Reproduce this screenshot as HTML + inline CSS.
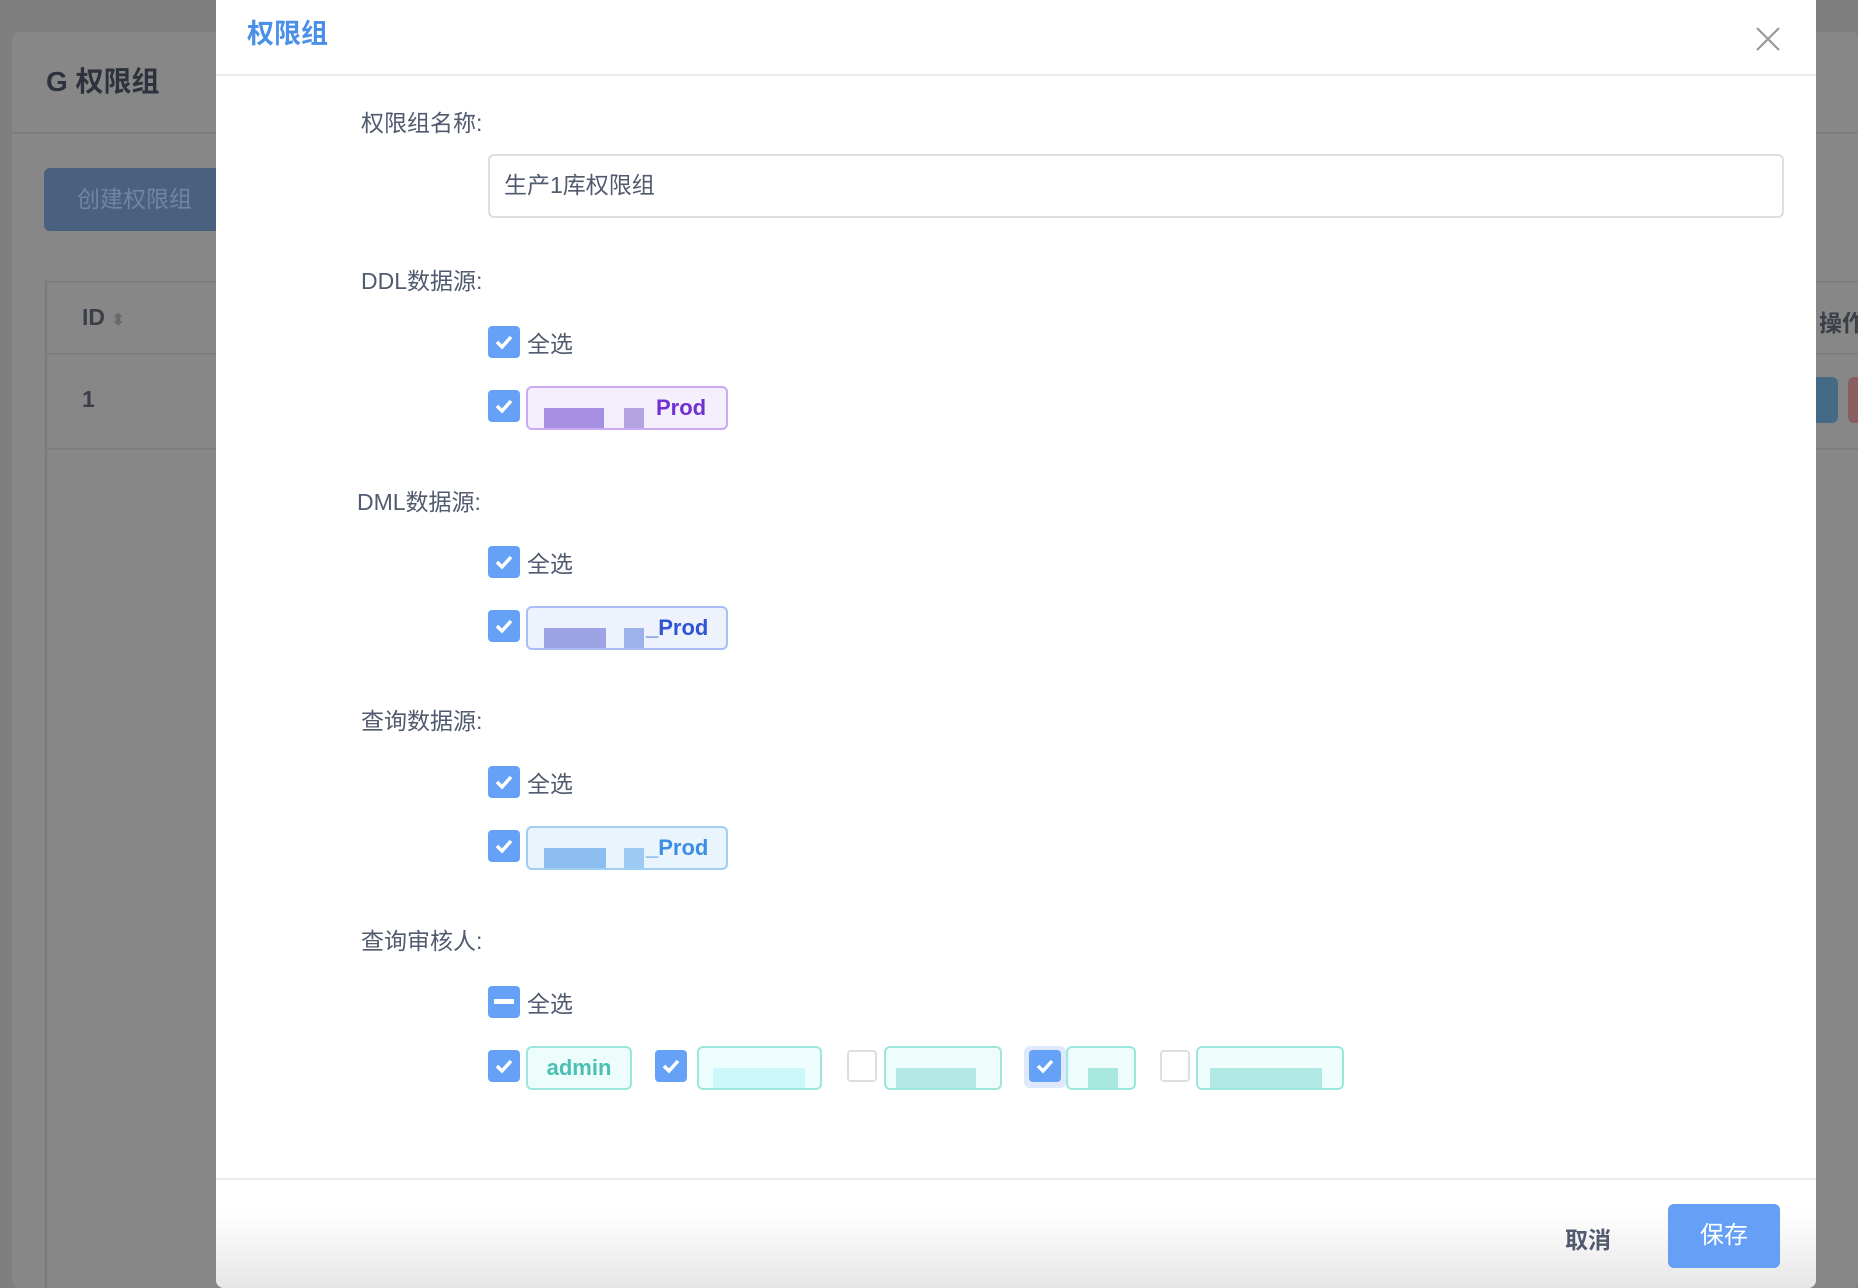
<!DOCTYPE html>
<html><head><meta charset="utf-8"><style>
*{box-sizing:border-box;margin:0;padding:0}
body{width:1858px;height:1288px;overflow:hidden;background:#7f7f80;font-family:"Liberation Sans","Noto Sans CJK SC",sans-serif;position:relative}
.a{position:absolute;white-space:nowrap}
.card{left:12px;top:32px;width:1846px;height:1256px;background:#878787;border-radius:6px}
.lbl{font-size:23px;color:#515a6e;left:361px}
.cb{width:32px;height:32px;border-radius:4px;background:#66a1f8;left:488px}
.cb svg{position:absolute;left:7px;top:8px}
.cbe{width:30px;height:32px;border-radius:4px;border:2px solid #dcdee2;background:#fff}
.sa{font-size:23px;color:#515a6e;left:527px}
.tag{height:44px;border-radius:6px;border:2px solid;font-size:22px;font-weight:bold;line-height:40px;overflow:hidden}
.px{position:absolute;height:20px;top:20px}
</style></head><body>
<div class="a card"></div>
<div class="a" style="left:12px;top:132px;width:1846px;height:2px;background:#7d7d7d"></div>
<div class="a" style="left:46px;top:60px;font-size:28px;font-weight:bold;color:#2d323d">G 权限组</div>
<div class="a" style="left:44px;top:168px;width:200px;height:63px;background:#4a607f;border-radius:6px;color:#6f85a0;font-size:23px;line-height:63px;padding-left:33px">创建权限组</div>
<div class="a" style="left:45px;top:281px;width:1813px;height:1007px;border-left:2px solid #7a7a7a;border-top:2px solid #7d7d7d"></div>
<div class="a" style="left:45px;top:353px;width:1813px;height:2px;background:#7d7d7d"></div>
<div class="a" style="left:45px;top:448px;width:1813px;height:2px;background:#7d7d7d"></div>
<div class="a" style="left:82px;top:304px;font-size:23px;font-weight:bold;color:#3a3f48">ID <span style="color:#6a6a6a;font-size:16px">⬍</span></div>
<div class="a" style="left:82px;top:386px;font-size:23px;font-weight:bold;color:#3a3f48">1</div>
<div class="a" style="left:1819px;top:304px;font-size:23px;font-weight:bold;color:#3a3f48">操作</div>
<div class="a" style="left:1790px;top:377px;width:48px;height:46px;background:#456a85;border-radius:6px"></div>
<div class="a" style="left:1848px;top:377px;width:20px;height:46px;background:#8a5d5f;border-radius:6px"></div>

<div class="a" style="left:216px;top:0;width:1600px;height:1288px;background:#fff;border-radius:0 0 8px 8px"></div>
<div class="a" style="left:216px;top:1180px;width:1600px;height:108px;background:linear-gradient(#fff 30%,#e6e6e6);border-radius:0 0 8px 8px"></div>
<div class="a" style="left:216px;top:74px;width:1600px;height:2px;background:#e8eaec"></div>
<div class="a" style="left:216px;top:1178px;width:1600px;height:2px;background:#e8eaec"></div>
<div class="a" style="left:247px;top:12px;font-size:27px;font-weight:bold;color:#4a8fe8">权限组</div>
<svg class="a" style="left:1756px;top:27px" width="24" height="24"><path d="M1 1L23 23M23 1L1 23" stroke="#999" stroke-width="2.2"/></svg>

<div class="a lbl" style="top:104px">权限组名称:</div>
<div class="a" style="left:488px;top:154px;width:1296px;height:64px;border:2px solid #dcdee2;border-radius:6px;font-size:23px;color:#515a6e;line-height:58px;padding-left:14px">生产1库权限组</div>

<div class="a lbl" style="top:262px">DDL数据源:</div>
<div class="a lbl" style="top:483px;left:357px">DML数据源:</div>
<div class="a lbl" style="top:702px">查询数据源:</div>
<div class="a lbl" style="top:922px">查询审核人:</div>

<div class="a cb" style="top:326px"><svg width="18" height="16"><path d="M2 8l5 5 9-10" stroke="#fff" stroke-width="3.5" fill="none"/></svg></div>
<div class="a sa" style="top:325px">全选</div>
<div class="a cb" style="top:546px"><svg width="18" height="16"><path d="M2 8l5 5 9-10" stroke="#fff" stroke-width="3.5" fill="none"/></svg></div>
<div class="a sa" style="top:545px">全选</div>
<div class="a cb" style="top:766px"><svg width="18" height="16"><path d="M2 8l5 5 9-10" stroke="#fff" stroke-width="3.5" fill="none"/></svg></div>
<div class="a sa" style="top:765px">全选</div>
<div class="a cb" style="top:986px"><div class="a" style="left:6px;top:13px;width:20px;height:5px;background:#fff"></div></div>
<div class="a sa" style="top:985px">全选</div>

<div class="a cb" style="top:390px"><svg width="18" height="16"><path d="M2 8l5 5 9-10" stroke="#fff" stroke-width="3.5" fill="none"/></svg></div>
<div class="a tag" style="left:526px;top:386px;width:202px;background:#f4effd;border-color:#c9aaf3;color:#7030d2;padding-left:128px">Prod
<div class="px" style="left:16px;width:60px;background:#a68fe0"></div><div class="px" style="left:96px;width:20px;background:#b4a3e0"></div></div>
<div class="a cb" style="top:610px"><svg width="18" height="16"><path d="M2 8l5 5 9-10" stroke="#fff" stroke-width="3.5" fill="none"/></svg></div>
<div class="a tag" style="left:526px;top:606px;width:202px;background:#eef2fd;border-color:#a8bef4;color:#2f55d4;padding-left:118px">_Prod
<div class="px" style="left:16px;width:62px;background:#9da4e6"></div><div class="px" style="left:96px;width:20px;background:#9db2eb"></div></div>
<div class="a cb" style="top:830px"><svg width="18" height="16"><path d="M2 8l5 5 9-10" stroke="#fff" stroke-width="3.5" fill="none"/></svg></div>
<div class="a tag" style="left:526px;top:826px;width:202px;background:#eaf4fd;border-color:#9fcff5;color:#3b8de6;padding-left:118px">_Prod
<div class="px" style="left:16px;width:62px;background:#8cbdef"></div><div class="px" style="left:96px;width:20px;background:#9ccaf2"></div></div>

<div class="a cb" style="top:1050px"><svg width="18" height="16"><path d="M2 8l5 5 9-10" stroke="#fff" stroke-width="3.5" fill="none"/></svg></div>
<div class="a tag" style="left:526px;top:1046px;width:106px;background:#edfdfb;border-color:#9de6dc;color:#4bbfb4;text-align:center">admin</div>
<div class="a cb" style="top:1050px;left:655px"><svg width="18" height="16"><path d="M2 8l5 5 9-10" stroke="#fff" stroke-width="3.5" fill="none"/></svg></div>
<div class="a tag" style="left:697px;top:1046px;width:125px;background:#eefdfd;border-color:#9de6dc"><div class="px" style="left:14px;width:92px;background:#cdf8fb"></div></div>
<div class="a cbe" style="top:1050px;left:847px"></div>
<div class="a tag" style="left:884px;top:1046px;width:118px;background:#eefcfc;border-color:#9de6dc"><div class="px" style="left:10px;width:80px;background:#b3e8e6"></div></div>
<div class="a" style="left:1024px;top:1046px;width:42px;height:42px;border-radius:6px;background:#dfe9fd"></div>
<div class="a cb" style="top:1050px;left:1029px"><svg width="18" height="16"><path d="M2 8l5 5 9-10" stroke="#fff" stroke-width="3.5" fill="none"/></svg></div>
<div class="a tag" style="left:1066px;top:1046px;width:70px;background:#eefdfb;border-color:#9de6dc"><div class="px" style="left:20px;width:30px;background:#a9e8df"></div></div>
<div class="a cbe" style="top:1050px;left:1160px"></div>
<div class="a tag" style="left:1196px;top:1046px;width:148px;background:#effdfd;border-color:#9de6dc"><div class="px" style="left:12px;width:112px;background:#b0e8e4"></div></div>

<div class="a" style="left:1565px;top:1221px;font-size:23px;font-weight:bold;color:#515a6e">取消</div>
<div class="a" style="left:1668px;top:1204px;width:112px;height:64px;background:#65a0f6;border-radius:6px;color:#fff;font-size:24px;line-height:64px;text-align:center">保存</div>
</body></html>
